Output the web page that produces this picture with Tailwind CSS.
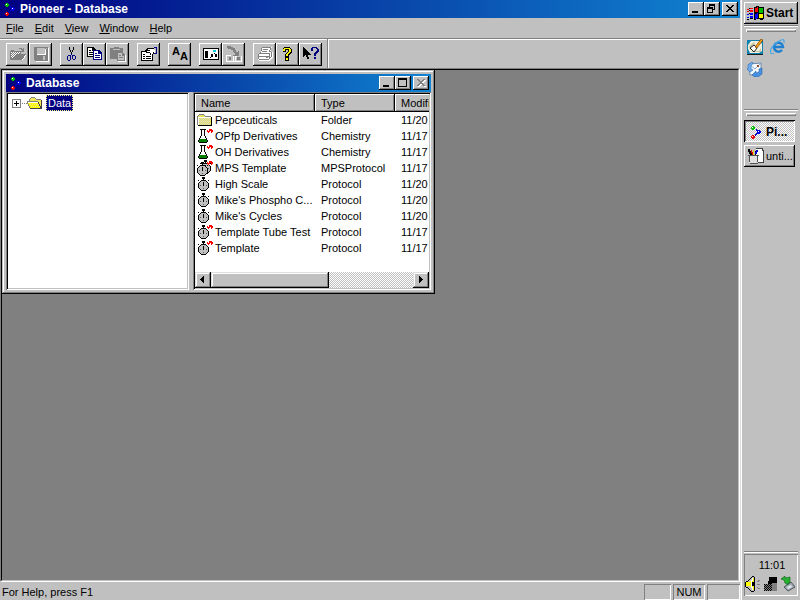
<!DOCTYPE html>
<html lang="en">
  <head>
    <meta charset="UTF-8" />
    <meta name="viewport" content="width=device-width, initial-scale=1.0" />
    <script src="https://cdn.jsdelivr.net/npm/@tailwindcss/browser@4"></script>
    <title>Pioneer - Database</title>
  </head>
  <body class="flex h-screen overflow-hidden bg-[#c0c0c0] font-['Liberation_Sans',Arial,sans-serif] text-[11px] leading-4 text-black">
    <!-- shared icons -->
    <svg class="hidden">
      <symbol id="molecule" viewBox="0 0 16 16">
        <path d="M8 5h1v1h1v1h-2zM9 9h1v1h-1v1h-1v1h-1v-2h1v-1z" fill="#0000c0" />
        <path d="M4 2h2v1h1v2h-1v1h-2v-1h-1v-2h1z" fill="#00c000" />
        <path d="M10 6h2v1h1v2h-1v1h-2v-1h-1v-2h1z" fill="#0000e0" />
        <path d="M4 11h2v1h1v2h-1v1h-2v-1h-1v-2h1z" fill="#e00000" />
        <path d="M4 3h1v1h-1zM10 7h1v1h-1zM4 12h1v1h-1z" fill="#fff" />
      </symbol>
      <symbol id="folder" viewBox="0 0 16 16">
        <path d="M1 4h1v-1h5v1h1v1h6v8h-13z" fill="#e8e060" />
        <path d="M3 6.500h10M3 8.500h10M3 10.500h10M3 12.500h10" stroke="#d8d8c8" stroke-dasharray="1 1" />
        <path d="M2 7.500h11M2 9.500h11M2 11.500h11" stroke="#d8d8c8" stroke-dasharray="1 1" />
        <path d="M0 4h1v9h-1zM1 3h1v1h-1zM2 2h5v1h-5zM7 3h1v1h-1zM8 4h6v1h-6z" fill="#808080" />
        <path d="M1 13h14v1h-14zM14 5h1v9h-1z" fill="#000" />
        <path d="M1 5h13v1h-12v7h-1z" fill="#fff" />
      </symbol>
      <symbol id="flask" viewBox="0 0 16 16">
        <path d="M4 2h4v6l2 4v2h-8v-2l2-4z" fill="#fff" />
        <path d="M3 1h6v1h-6zM4 2h1v6h-1zM7 2h1v6h-1zM3 8h1v2h-1zM8 8h1v2h-1zM2 10h1v2h-1zM9 10h1v2h-1zM1 12h1v2h-1zM10 12h1v2h-1zM2 14h8v1h-8z" fill="#000" />
        <path d="M3 11h6v1h1v2h-8v-2h1z" fill="#008000" />
      </symbol>
      <symbol id="stopwatch" viewBox="0 0 16 16">
        <path d="M4 5h5v1h1v1h1v5h-1v1h-1v1h-5v-1h-1v-1h-1v-5h1v-1h1z" fill="#c0c0c0" />
        <path d="M5 1h3v2h-1v1h2v1h-5v-1h2v-1h-1zM3 5h1v1h-1zM9 5h1v1h-1zM2 6h1v1h-1zM10 6h1v1h-1zM1 7h1v5h-1zM11 7h1v5h-1zM2 12h1v1h-1zM10 12h1v1h-1zM3 13h1v1h-1zM9 13h1v1h-1zM4 14h5v1h-5zM6 6h1v4h-1zM1 4h1v1h-1zM11 4h1v1h-1z" fill="#000" />
        <path d="M3 9h1v1h-1zM9 9h1v1h-1zM6 12h1v1h-1z" fill="#606060" />
      </symbol>
      <symbol id="badge" viewBox="0 0 16 16">
        <path d="M12 1h1v3h-1v1h-1v-1h-1v-2h1v1h1zM13 1h2v1h1v2h-1v1h-1v-2h-1z" fill="#f00" />
      </symbol>
    </svg>

    <main class="flex min-w-0 flex-1 flex-col">
      <header class="flex h-[18px] shrink-0 items-center bg-linear-to-r/srgb from-[#000080] to-[#1084d0] px-[2px] text-white">
        <svg class="h-4 w-4" shape-rendering="crispEdges"><use href="#molecule" /></svg>
        <h1 class="ml-[2px] flex-1 text-[12px] font-bold">Pioneer - Database</h1>
        <button aria-label="Minimize" class="h-[14px] w-4 bg-[#c0c0c0] shadow-[inset_-1px_-1px_#000,inset_1px_1px_#fff,inset_-2px_-2px_#808080]">
          <svg class="h-[14px] w-4" viewBox="0 0 16 14" shape-rendering="crispEdges"><path d="M4 9h6v2h-6z" fill="#000" /></svg>
        </button>
        <button aria-label="Restore" class="h-[14px] w-4 bg-[#c0c0c0] shadow-[inset_-1px_-1px_#000,inset_1px_1px_#fff,inset_-2px_-2px_#808080]">
          <svg class="h-[14px] w-4" viewBox="0 0 16 14" shape-rendering="crispEdges">
            <path d="M5 2h6v6h-6zM6 4v3h4v-3z" fill="#000" fill-rule="evenodd" />
            <path d="M3 5h6v6h-6z" fill="#000" /><path d="M4 7h4v3h-4z" fill="#c0c0c0" />
          </svg>
        </button>
        <button aria-label="Close" class="ml-[2px] h-[14px] w-4 bg-[#c0c0c0] shadow-[inset_-1px_-1px_#000,inset_1px_1px_#fff,inset_-2px_-2px_#808080]">
          <svg class="h-[14px] w-4" viewBox="0 0 16 14" shape-rendering="crispEdges"><path d="M4 3h2v1h1v1h2v-1h1v-1h2v1h-1v1h-1v1h-1v1h1v1h1v1h1v1h-2v-1h-1v-1h-2v1h-1v1h-2v-1h1v-1h1v-1h1v-1h-1v-1h-1v-1h-1z" fill="#000" /></svg>
        </button>
      </header>

      <nav class="flex h-5 shrink-0 items-center gap-[11px] px-[6px]">
        <a href="#"><u>F</u>ile</a>
        <a href="#"><u>E</u>dit</a>
        <a href="#"><u>V</u>iew</a>
        <a href="#"><u>W</u>indow</a>
        <a href="#"><u>H</u>elp</a>
      </nav>

      <!-- toolbar -->
      <div class="flex h-[30px] shrink-0 border-t border-[#808080] shadow-[inset_0_1px_#fff]">
        <div class="flex items-center gap-2 border-r border-white px-[6px] pt-px shadow-[inset_-1px_0_#808080,inset_0_1px_#fff]">
          <div class="flex">
            <button aria-label="Open" class="flex h-[23px] w-[23px] items-center justify-center shadow-[inset_-1px_-1px_#000,inset_1px_1px_#fff,inset_-2px_-2px_#808080]">
              <svg class="h-4 w-4" viewBox="0 0 16 16" shape-rendering="crispEdges">
                <path d="M1 14h12l4-6h-2l-3 5h-11z" fill="#fff" />
                <path d="M0 5h1v-1h3v1h7v3h5l-4 6h-12zM9 2h3v1h1v-1h1v4h-3v-1h1v-1h-1v-1h-2z" fill="#808080" />
                <path d="M1 6.500h9M1 8.500h5M1 10.500h3" stroke="#fff" stroke-dasharray="1 1" />
                <path d="M2 7.500h8M2 9.500h3M2 11.500h1" stroke="#fff" stroke-dasharray="1 1" />
              </svg>
            </button>
            <button aria-label="Save" class="flex h-[23px] w-[23px] items-center justify-center shadow-[inset_-1px_-1px_#000,inset_1px_1px_#fff,inset_-2px_-2px_#808080]">
              <svg class="h-4 w-4" viewBox="0 0 16 16" shape-rendering="crispEdges">
                <path d="M2 2h14v14h-13z" fill="#fff" />
                <path d="M1 1h14v14h-13l-1-1z" fill="#808080" />
                <path d="M4 2h8v6h-8zM10 10h2v4h-2zM13 2h1v1h-1z" fill="#c0c0c0" />
                <path d="M4 8h9v1h-9zM12 3h1v5h-1z" fill="#fff" />
              </svg>
            </button>
          </div>
          <div class="flex">
            <button aria-label="Cut" class="flex h-[23px] w-[23px] items-center justify-center shadow-[inset_-1px_-1px_#000,inset_1px_1px_#fff,inset_-2px_-2px_#808080]">
              <svg class="h-4 w-4" viewBox="0 0 16 16" shape-rendering="crispEdges">
                <path d="M5 1h1v3h1v2h1v-2h1v-3h1v3h-1v2h-1v2h-1v-2h-1v-2h-1z" fill="#000" />
                <path d="M7 8h1v1h-1zM6 9h1v1h-1zM8 9h1v1h-1zM4 9h2v1h-2zM3 10h1v4h-1zM6 10h1v4h-1zM4 14h2v1h-2zM9 9h2v1h-2zM8 10h1v3h-1zM11 10h1v3h-1zM9 13h2v1h-2z" fill="#000080" />
              </svg>
            </button>
            <button aria-label="Copy" class="flex h-[23px] w-[23px] items-center justify-center shadow-[inset_-1px_-1px_#000,inset_1px_1px_#fff,inset_-2px_-2px_#808080]">
              <svg class="h-4 w-4" viewBox="0 0 16 16" shape-rendering="crispEdges">
                <path d="M0 1h6l3 3v7h-9z" fill="#000" /><path d="M1 2h4v3h3v5h-7z" fill="#fff" />
                <path d="M2 4h2v1h-2zM2 6h4v1h-4zM2 8h4v1h-4z" fill="#000" />
                <path d="M6 4h6l3 3v7h-9z" fill="#000080" /><path d="M7 5h4v3h3v5h-7z" fill="#fff" />
                <path d="M8 7h2v1h-2zM8 9h5v1h-5zM8 11h5v1h-5z" fill="#000080" />
              </svg>
            </button>
            <button aria-label="Paste" class="flex h-[23px] w-[23px] items-center justify-center shadow-[inset_-1px_-1px_#000,inset_1px_1px_#fff,inset_-2px_-2px_#808080]">
              <svg class="h-4 w-4" viewBox="0 0 16 16" shape-rendering="crispEdges">
                <path d="M2 14h6v-7h6l2 3v6h-8v-2h-6z" fill="#fff" />
                <path d="M0 2h4v-1h5v1h4v4h-6v7h-7z" fill="#808080" />
                <path d="M3 3h7v1h-7z" fill="#c0c0c0" />
                <path d="M7 6h5l3 3v6h-8z" fill="#808080" /><path d="M8 7h4v3h2v4h-6z" fill="#c0c0c0" />
                <path d="M9 9h2v1h-2zM9 11h4v1h-4z" fill="#808080" />
              </svg>
            </button>
          </div>
          <button aria-label="Properties" class="flex h-[23px] w-[23px] items-center justify-center shadow-[inset_-1px_-1px_#000,inset_1px_1px_#fff,inset_-2px_-2px_#808080]">
            <svg class="h-4 w-4" viewBox="0 0 16 16" shape-rendering="crispEdges">
              <path d="M0 5h12v10h-12z" fill="#000" /><path d="M1 6h10v8h-10z" fill="#fff" />
              <path d="M2 8h2v1h-2zM2 10h2v1h-2zM5 10h5v1h-5zM2 12h2v1h-2zM5 12h5v1h-5z" fill="#000" />
              <path d="M4 4l2-2h5l3 2v4h-2l-3 1-1-2h-3z" fill="#fff" />
              <path d="M3 5h1v-1h1v-1h1v-1h5v1h-4v1h2v1h-3v1h3v1h-4v-1h-2zM9 7h1v2h-1zM11 2h2v1h-2zM12 6h1v2h-1z" fill="#000" />
              <path d="M13 1h3v7h-3v-1h2v-5h-2z" fill="#000080" />
            </svg>
          </button>
          <button aria-label="Font" class="flex h-[23px] w-[23px] items-center justify-center shadow-[inset_-1px_-1px_#000,inset_1px_1px_#fff,inset_-2px_-2px_#808080]">
            <svg class="h-4 w-4" viewBox="0 0 16 16" font-family="Liberation Sans" font-size="11" font-weight="bold">
              <text x="0" y="9">A</text><text x="8" y="14">A</text>
            </svg>
          </button>
          <div class="flex">
            <button aria-label="Panel" class="flex h-[23px] w-[23px] items-center justify-center shadow-[inset_-1px_-1px_#000,inset_1px_1px_#fff,inset_-2px_-2px_#808080]">
              <svg class="h-4 w-4" viewBox="0 0 16 16" shape-rendering="crispEdges">
                <path d="M0 2h16v12h-16z" fill="#000" /><path d="M1 3h14v10h-14z" fill="#fff" />
                <path d="M2 5h3v7h-3zM8 8h2v3h-2zM12 8h2v3h-2zM7 11h1v1h-1zM11 7h1v1h-1z" fill="#000" />
                <path d="M10 4h3v2h-3z" fill="#00c8d8" />
              </svg>
            </button>
            <button aria-label="Transfer" class="flex h-[23px] w-[23px] items-center justify-center shadow-[inset_-1px_-1px_#000,inset_1px_1px_#fff,inset_-2px_-2px_#808080]">
              <svg class="h-4 w-4" viewBox="0 0 16 16" shape-rendering="crispEdges">
                <path d="M0 9h5v1h-4v5h6v-5h1v5h1v-5h2v1h-1v4h5v-5h1v6h-16z" fill="#fff" />
                <path d="M1 0h4v1h2v1h2v2h1v2h2v-1h1v5h-6v-1h2v-2h-1v-1h-1v-2h-2v-1h-3v-1h-1zM3 11h2v3h-2zM11 11h3v3h-3z" fill="#808080" />
              </svg>
            </button>
          </div>
          <div class="flex">
            <button aria-label="Print" class="flex h-[23px] w-[23px] items-center justify-center shadow-[inset_-1px_-1px_#000,inset_1px_1px_#fff,inset_-2px_-2px_#808080]">
              <svg class="h-4 w-4" viewBox="0 0 16 16" shape-rendering="crispEdges">
                <path d="M5 1h10l-2 5h3v5l-3 4h-11l-1-2v-5l3-2z" fill="#fff" />
                <path d="M5 1h9v1h-9zM4 2h1v3h-1zM13 2h1v2h-1zM12 4h1v2h-1zM6 3h5v1h-5zM5 5h5v1h-5zM3 6h1v1h-1zM2 7h10v1h-10zM1 8h1v5h-1zM2 10h10v1h-10zM12 7h1v6h-1zM14 6h1v5h-1zM13 5h1v1h-1zM13 11h1v1h-1zM2 13h10v1h-10zM9 11h2v1h-2z" fill="#808080" />
              </svg>
            </button>
            <button aria-label="Help" class="flex h-[23px] w-[23px] items-center justify-center shadow-[inset_-1px_-1px_#000,inset_1px_1px_#fff,inset_-2px_-2px_#808080]">
              <svg class="h-4 w-4" viewBox="0 0 16 16" shape-rendering="crispEdges">
                <path d="M4 1h6v1h1v1h1v4h-1v1h-1v1h-1v2h-4v-3h1v-1h1v-1h1v-2h-2v2h-3v-4h1zM5 11h4v4h-4z" fill="#000" />
                <path d="M4 2h6v1h1v3h-1v1h-1v1h-1v2h-2v-2h1v-1h1v-1h1v-3h-4v2h-2v-2h1zM6 12h2v2h-2z" fill="#ff0" />
              </svg>
            </button>
            <button aria-label="What's this" class="flex h-[23px] w-[23px] items-center justify-center shadow-[inset_-1px_-1px_#000,inset_1px_1px_#fff,inset_-2px_-2px_#808080]">
              <svg class="h-4 w-4" viewBox="0 0 16 16" shape-rendering="crispEdges">
                <path d="M0 1h1v1h1v1h1v1h1v1h1v1h1v1h1v1h1v1h-3v2h1v2h-2v-2h-1v-2h-1v1h-1v1h-1z" fill="#000" />
                <path d="M9 1h5v1h1v1h1v3h-1v1h-1v1h-1v2h-2v-3h1v-1h1v-1h1v-2h-1v-1h-3v3h-2v-3h1zM11 11h2v2h-2z" fill="#000080" />
              </svg>
            </button>
          </div>
        </div>
      </div>

      <!-- MDI area -->
      <div class="min-h-0 flex-1 border border-t-[#808080] border-r-white border-b-white border-l-[#808080]">
        <div class="h-full border border-t-black border-r-[#c0c0c0] border-b-[#c0c0c0] border-l-black bg-[#808080]">
          <section class="flex h-[224px] w-[433px] flex-col bg-[#c0c0c0] p-1 shadow-[inset_-1px_-1px_#000,inset_1px_1px_#c0c0c0,inset_-2px_-2px_#808080,inset_2px_2px_#fff]">
            <header class="flex h-[18px] shrink-0 items-center bg-linear-to-r/srgb from-[#000080] to-[#1084d0] px-[2px] text-white">
              <svg class="h-4 w-4" shape-rendering="crispEdges"><use href="#molecule" /></svg>
              <h2 class="ml-[2px] flex-1 text-[12px] font-bold">Database</h2>
              <button aria-label="Minimize" class="h-[14px] w-4 bg-[#c0c0c0] shadow-[inset_-1px_-1px_#000,inset_1px_1px_#fff,inset_-2px_-2px_#808080]">
                <svg class="h-[14px] w-4" viewBox="0 0 16 14" shape-rendering="crispEdges"><path d="M4 9h6v2h-6z" fill="#000" /></svg>
              </button>
              <button aria-label="Maximize" class="h-[14px] w-4 bg-[#c0c0c0] shadow-[inset_-1px_-1px_#000,inset_1px_1px_#fff,inset_-2px_-2px_#808080]">
                <svg class="h-[14px] w-4" viewBox="0 0 16 14" shape-rendering="crispEdges"><path d="M3 2h9v9h-9zM4 4v6h7v-6z" fill="#000" fill-rule="evenodd" /></svg>
              </button>
              <button aria-label="Close" disabled class="ml-[2px] h-[14px] w-4 bg-[#c0c0c0] shadow-[inset_-1px_-1px_#000,inset_1px_1px_#fff,inset_-2px_-2px_#808080]">
                <svg class="h-[14px] w-4" viewBox="0 0 16 14" shape-rendering="crispEdges">
                  <path d="M5 4h2v1h1v1h2v-1h1v-1h2v1h-1v1h-1v1h-1v1h1v1h1v1h1v1h-2v-1h-1v-1h-2v1h-1v1h-2v-1h1v-1h1v-1h1v-1h-1v-1h-1v-1h-1z" fill="#fff" />
                  <path d="M4 3h2v1h1v1h2v-1h1v-1h2v1h-1v1h-1v1h-1v1h1v1h1v1h1v1h-2v-1h-1v-1h-2v1h-1v1h-2v-1h1v-1h1v-1h1v-1h-1v-1h-1v-1h-1z" fill="#808080" />
                </svg>
              </button>
            </header>

            <div class="flex min-h-0 flex-1 gap-1">
              <!-- tree -->
              <div class="w-[183px] shrink-0 bg-white px-[6px] py-[3px] shadow-[inset_1px_1px_#808080,inset_-1px_-1px_#fff,inset_2px_2px_#000,inset_-2px_-2px_#c0c0c0]">
                <div class="flex h-4 items-center">
                  <svg class="h-4 w-[15px]" viewBox="0 0 15 16" shape-rendering="crispEdges">
                    <path d="M0 4h9v9h-9zM1 5v7h7v-7z" fill="#808080" fill-rule="evenodd" />
                    <path d="M2 8h5v1h-5zM4 6h1v5h-1z" fill="#000" />
                    <path d="M10 8h1v1h-1zM12 8h1v1h-1zM14 8h1v1h-1z" fill="#808080" />
                  </svg>
                  <svg class="h-4 w-4" viewBox="0 0 16 16" shape-rendering="crispEdges">
                    <path d="M2 4h1v-1h1v-1h4v1h1v1h5v9h-12z" fill="#f0e850" />
                    <path d="M0 7h11l3 6h-11z" fill="#ff0" />
                    <path d="M1 7h10v1h-10z" fill="#fff" />
                    <path d="M3 9.500h9M4 11.500h9" stroke="#e0e0a0" stroke-dasharray="1 1" />
                    <path d="M4 2h4v1h-4zM3 3h1v1h-1zM8 3h1v1h-1zM2 4h1v2h-1zM9 4h5v1h-5zM0 6h11v1h-11zM0 7h1v2h-1zM1 9h1v2h-1zM2 11h1v2h-1z" fill="#808080" />
                    <path d="M14 5h1v9h-1zM3 13h12v1h-12zM11 7h1v2h-1zM12 9h1v2h-1zM13 11h1v2h-1z" fill="#404040" />
                  </svg>
                  <span class="ml-[3px] border border-dotted border-[#ffff7f] bg-[#000080] px-px leading-[14px] text-white">Data</span>
                </div>
              </div>

              <!-- list -->
              <div class="flex min-w-0 flex-1 flex-col bg-white p-[2px] shadow-[inset_1px_1px_#808080,inset_-1px_-1px_#fff,inset_2px_2px_#000,inset_-2px_-2px_#c0c0c0]">
                <div class="min-h-0 flex-1 overflow-hidden">
                  <table class="w-[280px] table-fixed border-collapse whitespace-nowrap">
                    <thead>
                      <tr class="h-[18px] bg-[#c0c0c0] text-left">
                        <th class="w-[120px] px-[6px] py-0 font-normal shadow-[inset_-1px_-1px_#000,inset_1px_1px_#fff,inset_-2px_-2px_#808080]">Name</th>
                        <th class="w-[80px] px-[6px] py-0 font-normal shadow-[inset_-1px_-1px_#000,inset_1px_1px_#fff,inset_-2px_-2px_#808080]">Type</th>
                        <th class="px-[6px] py-0 font-normal shadow-[inset_-1px_-1px_#000,inset_1px_1px_#fff,inset_-2px_-2px_#808080]">Modifi</th>
                      </tr>
                    </thead>
                    <tbody>
                      <tr>
                        <td><div class="flex h-4 items-center gap-[2px] pl-[2px]"><svg class="h-4 w-4" shape-rendering="crispEdges"><use href="#folder" /></svg>Pepceuticals</div></td>
                        <td class="px-[6px]">Folder</td>
                        <td class="px-[6px]">11/20</td>
                      </tr>
                      <tr>
                        <td><div class="flex h-4 items-center gap-[2px] pl-[2px]"><svg class="h-4 w-4" shape-rendering="crispEdges"><use href="#flask" /><use href="#badge" /></svg>OPfp Derivatives</div></td>
                        <td class="px-[6px]">Chemistry</td>
                        <td class="px-[6px]">11/17</td>
                      </tr>
                      <tr>
                        <td><div class="flex h-4 items-center gap-[2px] pl-[2px]"><svg class="h-4 w-4" shape-rendering="crispEdges"><use href="#flask" /><use href="#badge" /></svg>OH Derivatives</div></td>
                        <td class="px-[6px]">Chemistry</td>
                        <td class="px-[6px]">11/17</td>
                      </tr>
                      <tr>
                        <td><div class="flex h-4 items-center gap-[2px] pl-[2px]"><svg class="h-4 w-4" shape-rendering="crispEdges"><use href="#stopwatch" x="2" y="-1" /><use href="#stopwatch" x="-1" y="1" /><use href="#badge" /></svg>MPS Template</div></td>
                        <td class="px-[6px]">MPSProtocol</td>
                        <td class="px-[6px]">11/17</td>
                      </tr>
                      <tr>
                        <td><div class="flex h-4 items-center gap-[2px] pl-[2px]"><svg class="h-4 w-4" shape-rendering="crispEdges"><use href="#stopwatch" /></svg>High Scale</div></td>
                        <td class="px-[6px]">Protocol</td>
                        <td class="px-[6px]">11/20</td>
                      </tr>
                      <tr>
                        <td><div class="flex h-4 items-center gap-[2px] pl-[2px]"><svg class="h-4 w-4" shape-rendering="crispEdges"><use href="#stopwatch" /></svg>Mike's Phospho C...</div></td>
                        <td class="px-[6px]">Protocol</td>
                        <td class="px-[6px]">11/20</td>
                      </tr>
                      <tr>
                        <td><div class="flex h-4 items-center gap-[2px] pl-[2px]"><svg class="h-4 w-4" shape-rendering="crispEdges"><use href="#stopwatch" /></svg>Mike's Cycles</div></td>
                        <td class="px-[6px]">Protocol</td>
                        <td class="px-[6px]">11/20</td>
                      </tr>
                      <tr>
                        <td><div class="flex h-4 items-center gap-[2px] pl-[2px]"><svg class="h-4 w-4" shape-rendering="crispEdges"><use href="#stopwatch" /><use href="#badge" /></svg>Template Tube Test</div></td>
                        <td class="px-[6px]">Protocol</td>
                        <td class="px-[6px]">11/17</td>
                      </tr>
                      <tr>
                        <td><div class="flex h-4 items-center gap-[2px] pl-[2px]"><svg class="h-4 w-4" shape-rendering="crispEdges"><use href="#stopwatch" /><use href="#badge" /></svg>Template</div></td>
                        <td class="px-[6px]">Protocol</td>
                        <td class="px-[6px]">11/17</td>
                      </tr>
                    </tbody>
                  </table>
                </div>
                <div class="flex h-4 shrink-0 bg-[conic-gradient(#fff_25%,#c0c0c0_0_50%,#fff_0_75%,#c0c0c0_0)] bg-[length:2px_2px]">
                  <button aria-label="Scroll left" class="h-4 w-4 bg-[#c0c0c0] shadow-[inset_-1px_-1px_#000,inset_1px_1px_#dfdfdf,inset_-2px_-2px_#808080,inset_2px_2px_#fff]">
                    <svg class="h-4 w-4" viewBox="0 0 16 16" shape-rendering="crispEdges"><path d="M8 4h1v7h-1zM7 5h1v5h-1zM6 6h1v3h-1zM5 7h1v1h-1z" fill="#000" /></svg>
                  </button>
                  <div class="w-[118px] bg-[#c0c0c0] shadow-[inset_-1px_-1px_#000,inset_1px_1px_#dfdfdf,inset_-2px_-2px_#808080,inset_2px_2px_#fff]"></div>
                  <button aria-label="Scroll right" class="ml-auto h-4 w-4 bg-[#c0c0c0] shadow-[inset_-1px_-1px_#000,inset_1px_1px_#dfdfdf,inset_-2px_-2px_#808080,inset_2px_2px_#fff]">
                    <svg class="h-4 w-4" viewBox="0 0 16 16" shape-rendering="crispEdges"><path d="M6 4h1v7h-1zM7 5h1v5h-1zM8 6h1v3h-1zM9 7h1v1h-1z" fill="#000" /></svg>
                  </button>
                </div>
              </div>
            </div>
          </section>
        </div>
      </div>

      <footer class="flex h-[18px] shrink-0 gap-[2px] pt-[2px]">
        <div class="flex-1 pl-[2px]">For Help, press F1</div>
        <div class="w-[27px] shadow-[inset_1px_1px_#808080,inset_-1px_-1px_#fff]"></div>
        <div class="w-8 text-center shadow-[inset_1px_1px_#808080,inset_-1px_-1px_#fff]">NUM</div>
        <div class="w-[33px] shadow-[inset_1px_1px_#808080,inset_-1px_-1px_#fff]"></div>
      </footer>
    </main>

    <!-- taskbar -->
    <aside class="flex w-[60px] shrink-0 flex-col pt-[2px] pr-[2px] pb-1 pl-1 shadow-[inset_1px_0_#dfdfdf,inset_2px_0_#fff]">
      <button class="flex h-[22px] items-center gap-[2px] pl-[3px] text-[12px] font-bold shadow-[inset_-1px_-1px_#000,inset_1px_1px_#fff,inset_-2px_-2px_#808080]">
        <svg class="h-4 w-[17px]" viewBox="0 0 17 16" shape-rendering="crispEdges">
          <path d="M7 2l3-1 3 1h4v12l-3 1-3-1-4 1z" fill="#000" />
          <path d="M8 3l3-1v5h-3z" fill="#f00" /><path d="M12 3h4v5h-4z" fill="#00c000" />
          <path d="M8 9l3-1v5l-3 1z" fill="#00f" /><path d="M12 9h4v4h-4z" fill="#ff0" />
          <path d="M0 4h2v1h-2zM3 3h3v1h-3zM0 6h2v1h-2zM3 5h3v2h-3z" fill="#f00" />
          <path d="M0 9h2v1h-2zM3 8h3v2h-3zM0 12h2v1h-2zM3 11h3v2h-3z" fill="#00f" />
          <path d="M2 3h1v1h-1zM2 5h1v1h-1zM2 8h1v1h-1zM0 14h2v1h-2zM3 13h3v1h-3z" fill="#000" />
        </svg>
        Start
      </button>
      <div class="mt-px h-[2px] border-t border-[#808080] bg-white"></div>
      <div class="mx-[2px] mt-[2px] h-[3px] shadow-[inset_1px_1px_#fff,inset_-1px_-1px_#808080]"></div>
      <div class="grid grid-cols-[16px_16px] gap-x-[7px] gap-y-[6px] pt-[7px] pl-[3px]">
        <a href="#" aria-label="Show Desktop">
          <svg class="h-4 w-4" viewBox="0 0 16 16">
            <path d="M0 1h16v14H0z" fill="#1080b0" /><path d="M0 15h16v1H0z" fill="#202020" />
            <path d="M4 2h9l2 3v7l-3 2H3l-2-4V6z" fill="#f0f0dc" />
            <path d="M2 7l5-4 1 2-5 6zM4 12h8l2-3v4H5z" fill="#c8c8a8" />
            <path d="M3 9l4-3 3 3-3 4z" fill="#fff" stroke="#222" />
            <path d="M8 8l6-8 2 1-6 8z" fill="#f8a010" stroke="#603000" stroke-width=".6" />
          </svg>
        </a>
        <a href="#" aria-label="Internet Explorer">
          <svg class="h-4 w-4" viewBox="0 0 16 16" fill="none">
            <path d="M12 11a4.500 4.500 0 1 1 1-3H5" stroke="#2080d0" stroke-width="2.500" />
            <path d="M4 14C-1 17-1 10 5 5S15-1 14 4" stroke="#48a8e8" stroke-width="1.200" />
          </svg>
        </a>
        <a href="#" aria-label="Outlook Express">
          <svg class="h-4 w-4" viewBox="0 0 16 16">
            <path d="M2 3l12-1v11l-11 1z" fill="#f4f8fc" stroke="#6888b0" />
            <path d="M3 4l5 4 5-5" fill="none" stroke="#90b0d0" />
            <path d="M1 8V4l4-3 1 1-2 3v3l2 1-3 2-3-3z" fill="#70b0f0" stroke="#2868b0" stroke-width=".6" />
            <path d="M15 7v6l-4 3H7l1 0-3-2 4-4v2l3-1V8z" fill="#4890e0" stroke="#2868b0" stroke-width=".6" />
            <path d="M10 4h2v2h-2z" fill="#904830" />
          </svg>
        </a>
      </div>
      <div class="mt-8 h-[2px] border-t border-[#808080] bg-white"></div>
      <div class="mx-[2px] mt-[2px] h-[3px] shadow-[inset_1px_1px_#fff,inset_-1px_-1px_#808080]"></div>
      <button class="mt-1 mr-[3px] flex h-[22px] items-center gap-[2px] bg-[conic-gradient(#fff_25%,#c0c0c0_0_50%,#fff_0_75%,#c0c0c0_0)] bg-[length:2px_2px] pt-[2px] pl-1 text-[12px] font-bold shadow-[inset_1px_1px_#000,inset_-1px_-1px_#fff,inset_2px_2px_#808080]">
        <svg class="h-4 w-4" shape-rendering="crispEdges"><use href="#molecule" /></svg>
        Pi...
      </button>
      <button class="mt-[3px] mr-[3px] flex h-[22px] items-center gap-[2px] pl-1 shadow-[inset_-1px_-1px_#000,inset_1px_1px_#fff,inset_-2px_-2px_#808080]">
        <svg class="h-4 w-4" viewBox="0 0 16 16" shape-rendering="crispEdges">
          <path d="M8 0h6l2 3v12h-8z" fill="#fff" /><path d="M8 0h6v1h-6zM14 0h1v2h1v1h-2zM15 3h1v12h-1zM9 14h6v1h-6z" fill="#404040" />
          <path d="M1 8h9v7h-9z" fill="#e0e0e0" /><path d="M0 7h11v1h-11zM1 8h1v6h-1zM9 8h1v6h-1zM2 15h8v1h-8z" fill="#505050" />
          <path d="M0 1h2v2h1v2h1v2h-2v-1h-1v-2h-1zM7 3h1v4h-1z" fill="#000" />
          <path d="M3 2h1v2h1v3h-1v-2h-1z" fill="#e00000" /><path d="M5 2h1v5h-1z" fill="#e8d000" /><path d="M8 2h2v2h-1v2h-2v-2h1z" fill="#0000d0" />
        </svg>
        unti...
      </button>
      <div class="mt-auto h-[2px] border-t border-[#808080] bg-white"></div>
      <div class="mt-px h-[42px] pt-[3px] text-center shadow-[inset_1px_1px_#808080,inset_-1px_-1px_#fff]">
        <div class="pl-[2px]">11:01</div>
        <div class="mt-[3px] flex justify-center gap-[2px]">
          <svg class="h-4 w-4" viewBox="0 0 16 16" shape-rendering="crispEdges">
            <path d="M1 6h3l5-5v14l-5-5h-3z" fill="#ff0" />
            <path d="M1 5h2v1h-2zM0 6h1v5h-1zM1 11h2v1h-2zM3 4h1v1h-1zM4 3h1v1h-1zM5 2h1v1h-1zM6 1h1v1h-1zM7 0h2v1h-2zM3 12h1v1h-1zM4 13h1v1h-1zM5 14h1v1h-1zM6 15h3v1h-3zM9 1h1v14h-1zM7 6h2v4h-2z" fill="#000" />
            <path d="M6 4h1v8h-1zM7 2h1v3h-1zM7 11h1v3h-1z" fill="#fff" />
            <path d="M12 8h3v1h-3zM12 5h1v-1h2v1h-1v1h-2zM12 11h1v1h2v1h-2v-1h-1z" fill="#808080" />
          </svg>
          <svg class="h-4 w-4" viewBox="0 0 16 16" shape-rendering="crispEdges">
            <path d="M6 1h8v6h-5v2h-4v-4h1z" fill="#000" />
            <path d="M9 7h5v8h-5z" fill="#808080" /><path d="M1 8h8v7h-8z" fill="#808080" />
            <path d="M1 8.500h8M1 10.500h8M1 12.500h8M1 14.500h8" stroke="#000" stroke-dasharray="1 1" />
            <path d="M2 9.500h7M2 11.500h7M2 13.500h7" stroke="#000" stroke-dasharray="1 1" />
          </svg>
          <svg class="h-4 w-4" viewBox="0 0 16 16">
            <path d="M3 11l7-5 4 5-7 4z" fill="#a0a8b0" stroke="#505860" /><path d="M6 11l4-2 1 2-4 2z" fill="#e0e8f0" />
            <path d="M0 3l4-3v2l5-1v6h-2v2l-3-2-1-3z" fill="#28b030" stroke="#086018" stroke-width=".6" />
          </svg>
        </div>
      </div>
    </aside>
  </body>
</html>
